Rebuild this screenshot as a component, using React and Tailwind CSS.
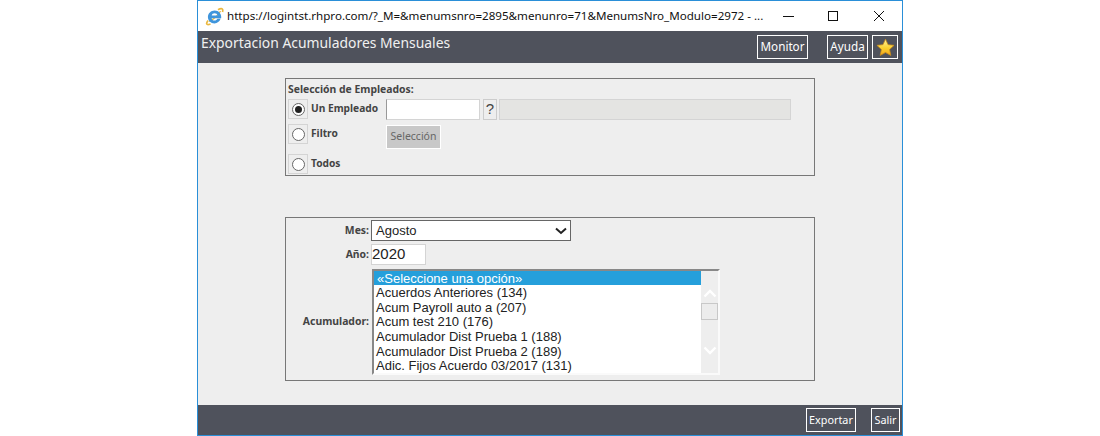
import React from "react";

const ACUMULADORES = [
    "Acuerdos Anteriores (134)",
    "Acum Payroll auto a (207)",
    "Acum test 210 (176)",
    "Acumulador Dist Prueba 1 (188)",
    "Acumulador Dist Prueba 2 (189)",
    "Adic. Fijos Acuerdo 03/2017 (131)",
];

const tahoma = "font-['Noto_Sans','Open_Sans',sans-serif]";
const arial = "font-['Liberation_Sans',Arial,sans-serif]";

function IeIcon(){
    return(
        <svg width="19" height="19" viewBox="0 0 19 19">
            {/* gold orbit behind the e */}
            <path d="M3 13.5C0.5 17 1.5 18.5 5.5 17M13 2.8C16.5 0.5 18.5 1.5 17.5 5" fill="none" stroke="#eab83f" strokeWidth="1.7"/>
            <path d="M4 14.5C8 13 14 7.5 15.5 4" fill="none" stroke="#eab83f" strokeWidth="1.2"/>
            <path d="M15.6 11.8H12.4C11.8 13 10.8 13.6 9.6 13.6C7.9 13.6 6.8 12.6 6.6 11.2H16.2C16.8 6.8 13.8 3.4 9.6 3.4C6 3.4 2.9 6.2 2.9 10C2.9 13.7 5.8 16.4 9.5 16.4C12.3 16.4 14.6 14.6 15.6 11.8ZM6.7 8.5C7 7.1 8.1 6.2 9.6 6.2C11.1 6.2 12.3 7.1 12.5 8.5Z" fill="#3f95dc" fillRule="evenodd"/>
        </svg>
    )
}

function HeaderButton({children, className}){
    return(
        <div className={"flex items-center justify-center h-[24px] border border-white text-white " + className}>
            {children}
        </div>
    )
}

function RadioRow({label, checked, className}){
    return(
        <div className={"flex items-center gap-[3px] " + className}>
            <div className="flex items-center justify-center w-[20px] h-[20px] border border-[#d4d4d4]">
                <div className="flex items-center justify-center w-[13px] h-[13px] rounded-full border border-[#666] bg-white">
                    {checked && <div className="w-[7px] h-[7px] rounded-full bg-[#222]"></div>}
                </div>
            </div>
            <span className="text-[10.2px] font-bold text-[#444]">{label}</span>
        </div>
    )
}

function EmployeePanel(){
    return(
        <div className={"w-[530px] h-[98px] mx-auto border border-[#777] pl-[2px] pt-[4px] " + tahoma}>
            <p className="text-[10.4px] leading-[13px] font-bold text-[#444]">Selección de Empleados:</p>
            <div className="flex mt-[3px]">
                <div className="flex flex-col w-[98px]">
                    <RadioRow label="Un Empleado" checked={true} className="h-[20px]"/>
                    <RadioRow label="Filtro" className="h-[20px] mt-[5px]"/>
                    <RadioRow label="Todos" className="h-[20px] mt-[10px]"/>
                </div>
                <div className="flex flex-col">
                    <div className="flex">
                        <div className="w-[94px] h-[21px] bg-white border border-[#d4d4d4] border-l-[#999]"></div>
                        <div className={"flex items-center justify-center w-[14px] h-[21px] ml-[3px] border border-[#ccc] text-[15px] text-[#444] " + arial}>?</div>
                        <div className="w-[292px] h-[21px] ml-[2px] bg-[#e4e4e2] border border-[#d4d4d4]"></div>
                    </div>
                    <div className="flex items-center justify-center w-[55px] h-[24px] mt-[5px] bg-[#c8c8c8] border border-white text-[10.5px] text-[#666]">Selección</div>
                </div>
            </div>
        </div>
    )
}

function AcumuladoresList(){
    return(
        <div className={"flex w-[348px] h-[106px] border-2 border-r-[#fafafa] border-b-[#fafafa] border-t-[#888] border-l-[#888] bg-white text-[13px] text-[#222] " + arial}>
            <div className="flex flex-col w-[327px]">
                <div className="h-[14px] leading-[14px] pl-[3px] pt-[1px] bg-[#259fdb] text-white">«Seleccione una opción»</div>
                {ACUMULADORES.map((item, itemIndex) => {
                    return(
                        <div key={itemIndex} className="h-[14.7px] leading-[15px] pl-[2px] whitespace-nowrap">{item}</div>
                    )
                })}
            </div>
            <div className="flex flex-col items-center w-[17px] ml-auto bg-[#eeeeee]">
                <svg className="mt-[17px]" width="14" height="10" viewBox="0 0 14 10">
                    <path d="M1.5 8.5L7 3L12.5 8.5" fill="none" stroke="#fff" strokeWidth="2.4"/>
                </svg>
                <div className="w-[17px] h-[17px] mt-[5px] bg-[#ececec] border border-[#c8c8c8]"></div>
                <svg className="mt-[26px]" width="14" height="10" viewBox="0 0 14 10">
                    <path d="M1.5 1.5L7 7L12.5 1.5" fill="none" stroke="#fff" strokeWidth="2.4"/>
                </svg>
            </div>
        </div>
    )
}

function MonthPanel(){
    return(
        <div className={"w-[530px] h-[164px] mt-[41px] mx-auto border border-[#777] pt-[2px] " + tahoma}>
            <div className="flex items-center h-[21px]">
                <span className="w-[83px] text-right text-[10.4px] font-bold text-[#444]">Mes:</span>
                <div className={"flex items-center justify-between w-[200px] h-[21px] ml-[2px] pl-[4px] pr-[3px] bg-white border border-[#666] text-[13px] text-[#222] " + arial}>
                    <span>Agosto</span>
                    <svg width="12" height="8" viewBox="0 0 12 8">
                        <path d="M1 1.5L6 6L11 1.5" fill="none" stroke="#222" strokeWidth="2"/>
                    </svg>
                </div>
            </div>
            <div className="flex items-center h-[21px] mt-[3px]">
                <span className="w-[83px] text-right text-[10.4px] font-bold text-[#444]">Año:</span>
                <div className={"w-[55px] h-[21px] ml-[2px] bg-white border border-[#d4d4d4] text-[15px] leading-[17px] text-[#222] " + arial}>2020</div>
            </div>
            <div className="flex items-center mt-[4px]">
                <span className="w-[83px] text-right text-[10.4px] font-bold text-[#444]">Acumulador:</span>
                <div className="ml-[3px]"><AcumuladoresList/></div>
            </div>
        </div>
    )
}

export default function App(){
    return(
        <div className="w-[1100px] h-[436px] bg-white">
            <div className={"flex flex-col w-[706px] h-[436px] mx-auto border border-[#2a8fd8] " + tahoma}>
                <div className="flex items-center h-[30px] bg-white">
                    <div className="ml-[7px] flex"><IeIcon/></div>
                    <span className="ml-[3px] w-[556px] text-[11.6px] text-[#111] whitespace-nowrap overflow-hidden">https://logintst.rhpro.com/?_M=&amp;menumsnro=2895&amp;menunro=71&amp;MenumsNro_Modulo=2972 - ...</span>
                    <svg width="12" height="12" viewBox="0 0 12 12"><path d="M0 6.5H11" stroke="#111" strokeWidth="1"/></svg>
                    <svg className="ml-[32px]" width="12" height="12" viewBox="0 0 12 12"><rect x="1.5" y="1.5" width="9" height="9" fill="none" stroke="#111"/></svg>
                    <svg className="ml-[34px]" width="12" height="12" viewBox="0 0 12 12"><path d="M1 1L11 11M11 1L1 11" stroke="#111" strokeWidth="1"/></svg>
                </div>
                <div className="flex items-start h-[32px] bg-[#4f525c] pl-[3px]">
                    <span className="mt-[2px] text-[13.9px] leading-[19px] text-[#f0f0f0] whitespace-nowrap">Exportacion Acumuladores Mensuales</span>
                    <div className="flex ml-auto mt-[4px] mr-[4px]">
                        <HeaderButton className="w-[51px] text-[11.7px]">Monitor</HeaderButton>
                        <HeaderButton className="w-[41px] ml-[19px] text-[11.7px]">Ayuda</HeaderButton>
                        <HeaderButton className="w-[26px] ml-[4px]">
                            <svg width="19" height="19" viewBox="0 0 24 24">
                                <defs>
                                    <linearGradient id="starFill" x1="0" y1="0" x2="0" y2="1">
                                        <stop offset="0" stopColor="#fff3a0"/>
                                        <stop offset="0.55" stopColor="#fbd02e"/>
                                        <stop offset="1" stopColor="#f2a51c"/>
                                    </linearGradient>
                                </defs>
                                <path d="M12 1.5L15.2 8.4L22.8 9.3L17.2 14.5L18.7 22L12 18.3L5.3 22L6.8 14.5L1.2 9.3L8.8 8.4Z" fill="url(#starFill)" stroke="#c98a1a" strokeWidth="1" strokeLinejoin="round"/>
                            </svg>
                        </HeaderButton>
                    </div>
                </div>
                <div className="flex-1 bg-[#eeeeee] pt-[15px]">
                    <EmployeePanel/>
                    <MonthPanel/>
                </div>
                <div className="flex items-center justify-end h-[30px] pr-[2px] bg-[#4f525c]">
                    <HeaderButton className="w-[50px] text-[10.8px]">Exportar</HeaderButton>
                    <HeaderButton className="w-[29px] ml-[15px] text-[10.8px]">Salir</HeaderButton>
                </div>
            </div>
        </div>
    )
}
